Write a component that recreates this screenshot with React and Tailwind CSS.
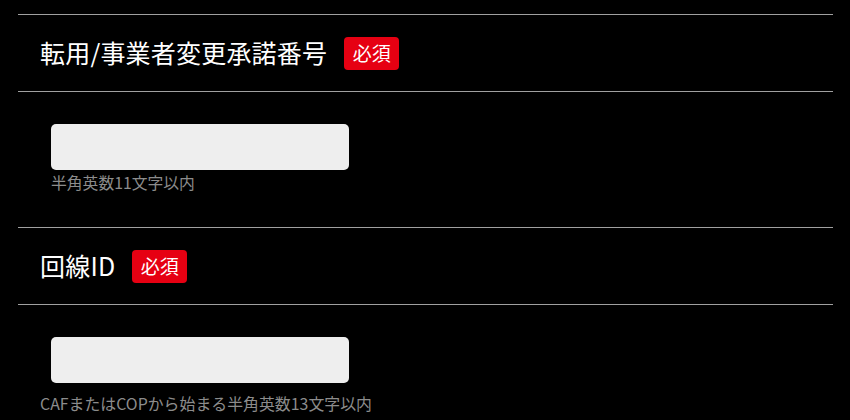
function Badge() {
  return (
    <span className="ml-[17px] inline-flex h-[33px] w-[55px] items-center justify-center rounded-[4px] bg-[#e60012] text-[19px] text-white">
      必須
    </span>
  );
}

function FieldHeader({ label }) {
  return (
    <div className="flex h-[77px] items-center border-t border-[#a0a0a0] pl-[22px]">
      <h2 className="text-[25px] font-normal tracking-[0.2px] text-white">{label}</h2>
      <Badge />
    </div>
  );
}

export default function App() {
  return (
    <div
      className="min-h-screen bg-black pt-[14px] pl-[18px] pr-[17px]"
      style={{ fontFamily: '"Noto Sans CJK JP", "Noto Sans", sans-serif' }}
    >
      <FieldHeader label="転用/事業者変更承諾番号" />
      <div className="h-[136px] border-t border-[#a0a0a0] pl-[33px] pt-[32px]">
        <input
          type="text"
          className="block h-[46px] w-[298px] rounded-[5px] bg-[#eeeeee] outline-none"
        />
        <p className="mt-[3px] text-[15.8px] leading-[20px] text-[#8c8c8c]">半角英数11文字以内</p>
      </div>

      <FieldHeader label="回線ID" />
      <div className="border-t border-[#a0a0a0] pt-[32px]">
        <input
          type="text"
          className="ml-[33px] block h-[46px] w-[298px] rounded-[5px] bg-[#eeeeee] outline-none"
        />
        <p className="mt-[11px] pl-[22px] text-[15.9px] leading-[20px] text-[#8c8c8c]">
          CAFまたはCOPから始まる半角英数13文字以内
        </p>
      </div>
    </div>
  );
}
